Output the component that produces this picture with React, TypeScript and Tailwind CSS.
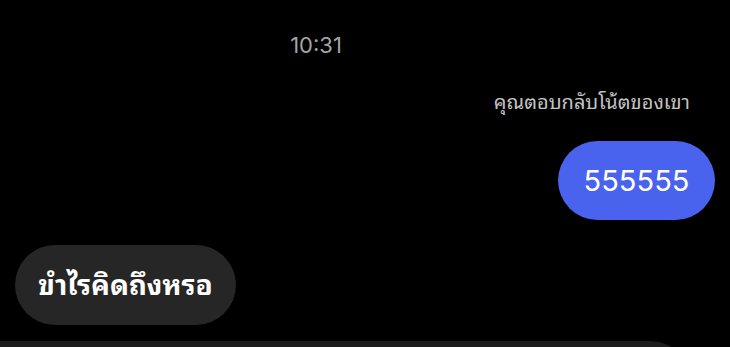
export default function App() {
  return (
    <div
      className="w-[730px] h-[347px] bg-black overflow-hidden relative flex flex-col"
      style={{ fontFamily: '"Inter", "Noto Sans Thai Looped", "Garuda", "Loma", "Noto Sans", "Noto Sans Thai", "Liberation Sans", sans-serif' }}
    >
      <div className="h-[33px] shrink-0" />
      <div className="h-[24px] shrink-0 flex items-center justify-center text-[22px] text-[#a3a3a3] pr-[98px]">10:31</div>
      <div className="h-[34px] shrink-0" />
      <div className="h-[22px] shrink-0 flex items-center justify-end pr-[40px] text-[20px] text-[#c4c4c4]">คุณตอบกลับโน้ตของเขา</div>
      <div className="h-[28px] shrink-0" />
      <div className="flex justify-end pr-[15px] shrink-0">
        <div className="h-[79px] w-[157px] rounded-full bg-[#4a63ee] text-white text-[29px] flex items-center justify-center">555555</div>
      </div>
      <div className="h-[25px] shrink-0" />
      <div className="flex justify-start pl-[15px] shrink-0">
        <div className="h-[80px] w-[221px] rounded-full bg-[#262626] text-white text-[28px] font-bold flex items-center justify-center">ขำไรคิดถึงหรอ</div>
      </div>
      <div className="h-[16px] shrink-0" />
      <div className="h-[40px] w-[692px] -ml-[2px] bg-[#1c1c1c] rounded-tr-[40px] shrink-0" />
    </div>
  );
}
